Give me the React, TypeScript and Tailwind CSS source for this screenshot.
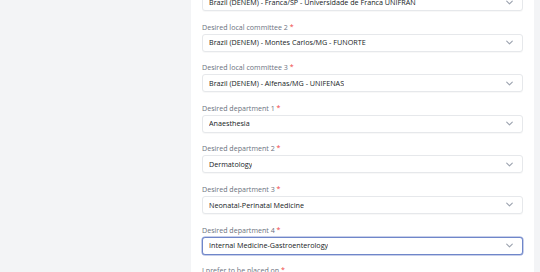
const fields = [
  { label: "Desired local committee 1", value: "Brazil (DENEM) - Franca/SP - Universidade de Franca UNIFRAN" },
  { label: "Desired local committee 2", value: "Brazil (DENEM) - Montes Carlos/MG - FUNORTE" },
  { label: "Desired local committee 3", value: "Brazil (DENEM) - Alfenas/MG - UNIFENAS" },
  { label: "Desired department 1", value: "Anaesthesia" },
  { label: "Desired department 2", value: "Dermatology" },
  { label: "Desired department 3", value: "Neonatal-Perinatal Medicine" },
  { label: "Desired department 4", value: "Internal Medicine-Gastroenterology", focused: true },
];

function Chevron() {
  return (
    <svg width="7" height="5" viewBox="0 0 10 6" fill="none" stroke="#9ca3af" strokeWidth="1.6" strokeLinecap="round" strokeLinejoin="round">
      <path d="M1 1l4 4 4-4" />
    </svg>
  );
}

function Field({ label, value, focused }: { label: string; value: string; focused?: boolean }) {
  return (
    <div className="flex flex-col">
      <label className="h-[10px] text-[7.1px] leading-[10px] text-[#6b7280]">
        {label} <span className="text-[#ef4444]">*</span>
      </label>
      <div
        className={
          focused
            ? "mt-[2px] flex h-[18px] items-center justify-between rounded-[3px] border border-[#6f86c9] bg-white pl-[6px] pr-[9px] shadow-[0_0_0_0.5px_#8fa0d6]"
            : "mt-[2px] flex h-[18px] items-center justify-between rounded-[3px] border border-[#e6e8eb] bg-white pl-[6px] pr-[9px] shadow-[0_1px_1px_rgba(0,0,0,0.03)]"
        }
      >
        <span className="truncate text-[7.2px] text-[#161a24]">{value}</span>
        <Chevron />
      </div>
    </div>
  );
}

export default function App() {
  return (
    <div className="flex h-[272px] w-[540px] overflow-hidden bg-[#f3f4f6] font-['Open_Sans',sans-serif]">
      <div className="w-[191px] shrink-0" />
      <div className="w-[343px] shrink-0 bg-white px-[11px]">
        <div className="-mt-[19px] flex flex-col gap-[10.6px]">
          {fields.map((f) => (
            <Field key={f.label} label={f.label} value={f.value} focused={f.focused} />
          ))}
          <label className="h-[10px] text-[7.1px] leading-[10px] text-[#6b7280]">
            I prefer to be placed on <span className="text-[#ef4444]">*</span>
          </label>
        </div>
      </div>
    </div>
  );
}
